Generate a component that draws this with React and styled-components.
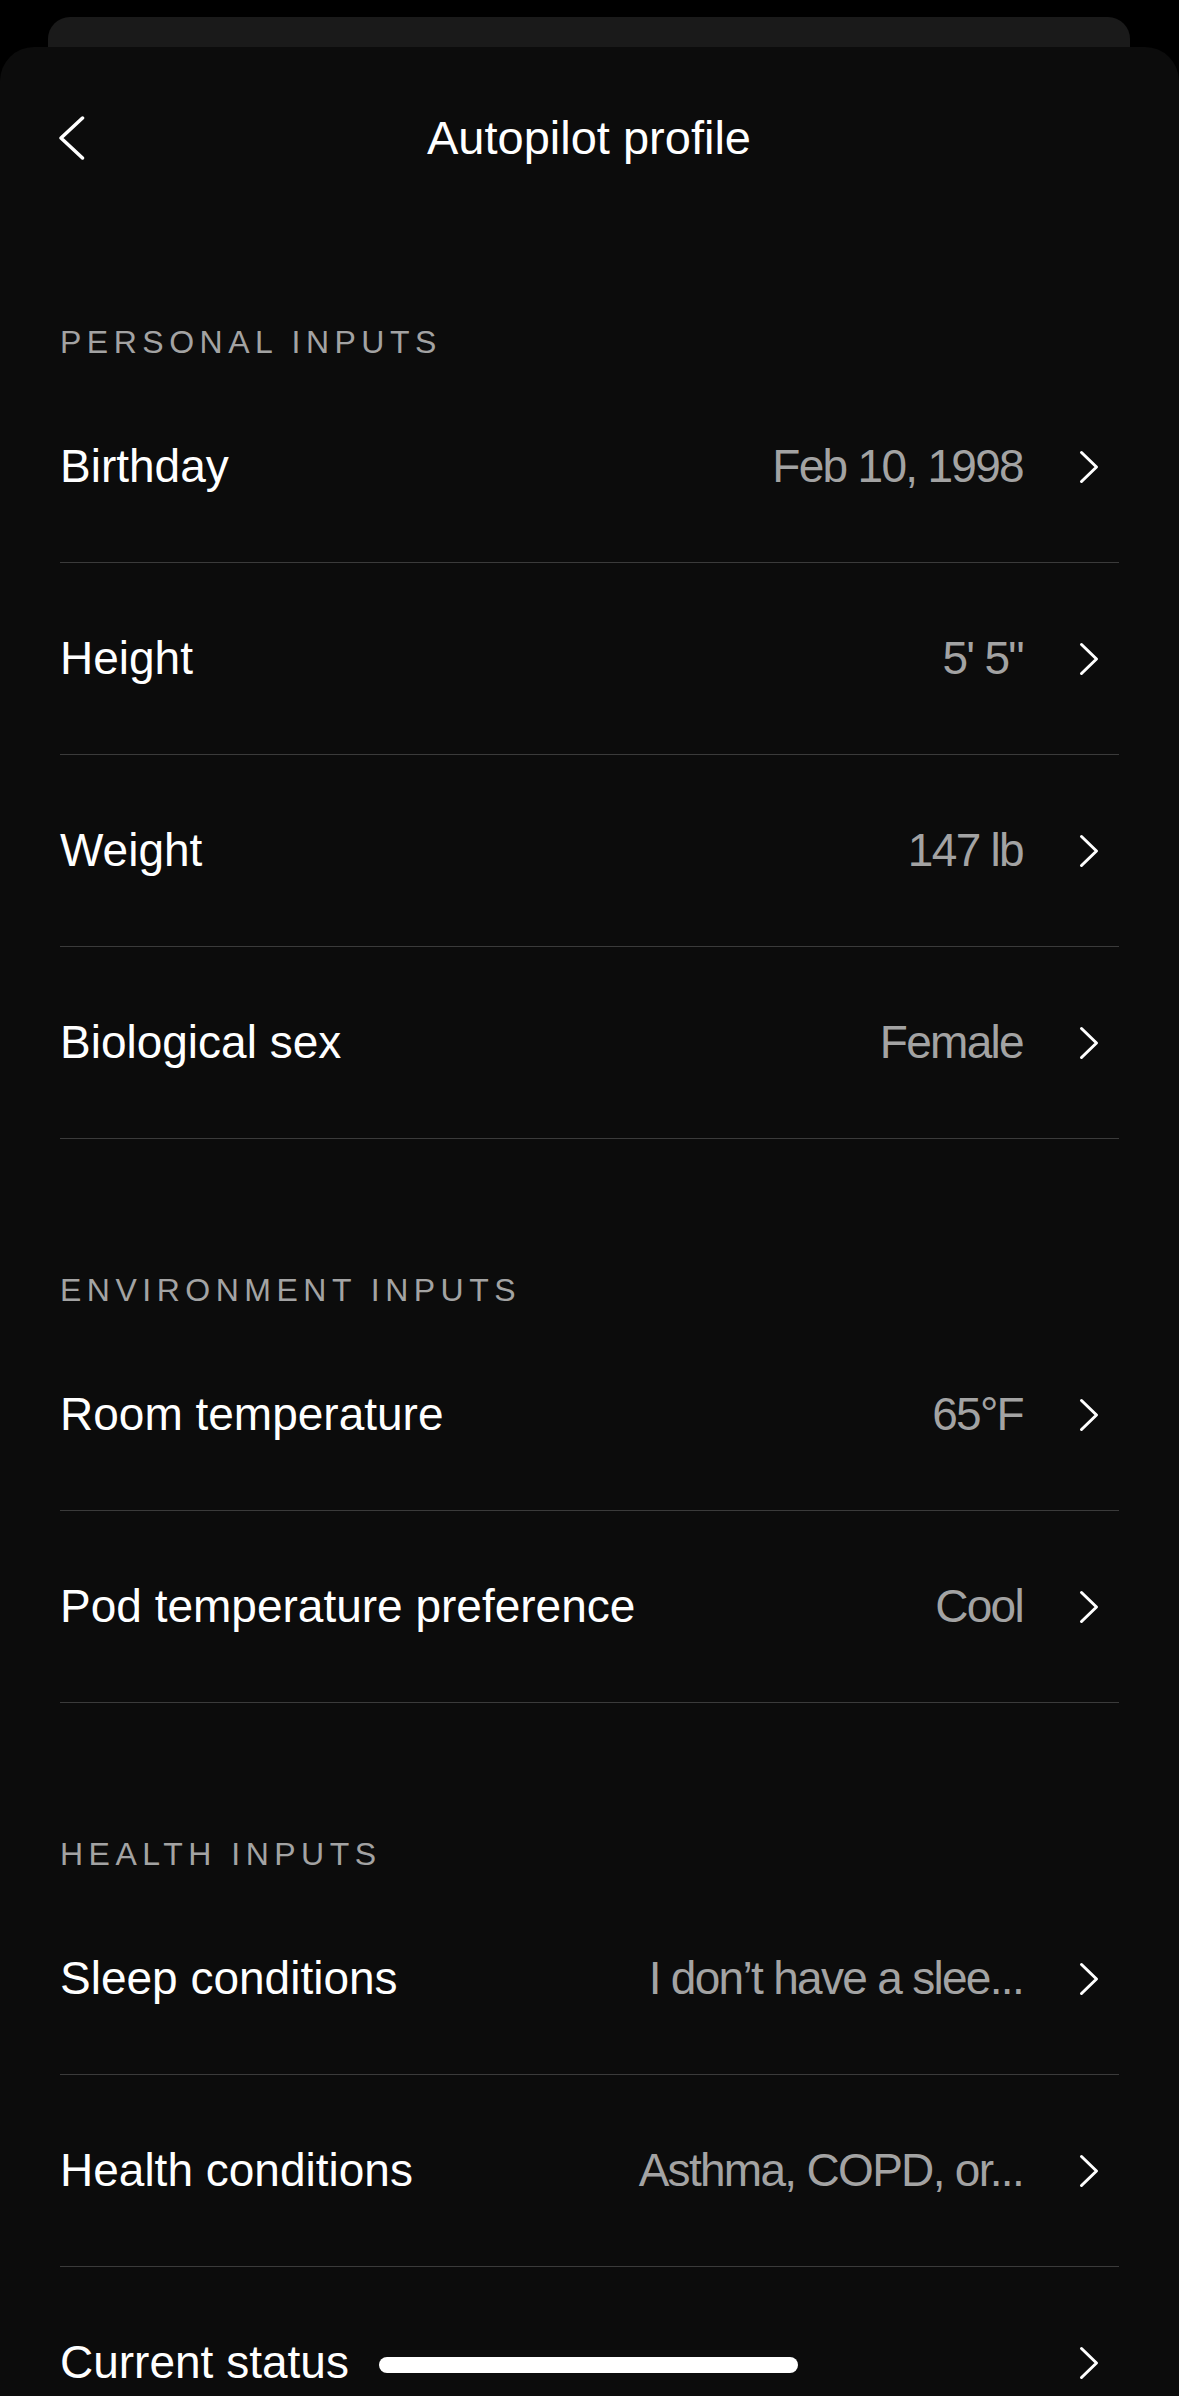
import React from 'react';
import styled, { createGlobalStyle } from 'styled-components';

const GlobalStyle = createGlobalStyle`
  html, body {
    margin: 0;
    padding: 0;
    background: #000;
  }
  body {
    font-family: "Liberation Sans", Arial, sans-serif;
    -webkit-font-smoothing: antialiased;
  }
`;

const Page = styled.div`
  min-height: 2396px;
  padding-top: 17px;
  box-sizing: border-box;
  background: #000;
`;

const BackSheet = styled.div`
  height: 60px;
  margin: 0 49px 0 48px;
  border-radius: 22px 22px 0 0;
  background: #1a1a1a;
`;

const Sheet = styled.div`
  position: relative;
  margin-top: -30px;
  min-height: 2349px;
  background: #0c0c0c;
  border-radius: 34px 34px 0 0;
`;

const NavBar = styled.div`
  display: grid;
  grid-template-columns: 1fr auto 1fr;
  align-items: center;
  height: 80px;
  padding: 51px 60px 13px 59px;
`;

const BackButton = styled.button`
  justify-self: start;
  display: flex;
  align-items: center;
  padding: 0;
  border: 0;
  background: transparent;
  color: #fff;
  cursor: pointer;
`;

const Title = styled.h1`
  margin: 0;
  font-size: 47px;
  font-weight: 400;
  line-height: 80px;
  color: #fff;
`;

const Section = styled.section`
  padding-top: ${({ first }) => (first ? '131px' : '131px')};
`;

const SectionTitle = styled.h2`
  margin: 0 60px 9px;
  font-size: 32px;
  font-weight: 400;
  line-height: 40px;
  letter-spacing: 5.5px;
  color: #a3a3a3;
`;

const Row = styled.div`
  display: flex;
  align-items: center;
  height: 192px;
  box-sizing: border-box;
  margin: 0 60px;
  border-bottom: 1px solid ${({ last }) => (last ? 'transparent' : '#3b3b3b')};
  cursor: pointer;
`;

const Label = styled.span`
  font-size: 46px;
  line-height: 1.2;
  color: #fff;
  white-space: nowrap;
`;

const Value = styled.span`
  margin-left: auto;
  font-size: 46px;
  line-height: 1.2;
  letter-spacing: -1.7px;
  color: #a3a3a3;
  white-space: nowrap;
`;

const Redacted = styled.span`
  width: 419px;
  height: 16px;
  margin-left: 30px;
  margin-top: 4px;
  border-radius: 8px;
  background: #fff;
`;

const Spacer = styled.span`
  flex: 1;
`;

const ChevronBox = styled.span`
  display: flex;
  margin-left: 56px;
  margin-right: 20px;
  color: #fff;
`;

const ChevronLeft = () => (
  <svg width="26" height="44" viewBox="0 0 26 44" fill="none">
    <polyline points="23.5,2 2,22 23.5,42" stroke="currentColor" strokeWidth="3.5" strokeLinecap="round" strokeLinejoin="round" />
  </svg>
);

const ChevronRight = () => (
  <svg width="20" height="34" viewBox="0 0 20 34" fill="none">
    <polyline points="2.5,2.5 17.5,17 2.5,31.5" stroke="currentColor" strokeWidth="3" strokeLinecap="round" strokeLinejoin="round" />
  </svg>
);

const sections = [
  {
    title: 'PERSONAL INPUTS',
    rows: [
      { label: 'Birthday', value: 'Feb 10, 1998' },
      { label: 'Height', value: '5\' 5"' },
      { label: 'Weight', value: '147 lb' },
      { label: 'Biological sex', value: 'Female' }
    ]
  },
  {
    title: 'ENVIRONMENT INPUTS',
    rows: [
      { label: 'Room temperature', value: '65°F' },
      { label: 'Pod temperature preference', value: 'Cool' }
    ]
  },
  {
    title: 'HEALTH INPUTS',
    rows: [
      { label: 'Sleep conditions', value: 'I don’t have a slee...' },
      { label: 'Health conditions', value: 'Asthma, COPD, or...' },
      { label: 'Current status', redacted: true }
    ]
  }
];

const App = () => (
  <>
    <GlobalStyle />
    <Page>
      <BackSheet />
      <Sheet>
        <NavBar>
          <BackButton aria-label="Back">
            <ChevronLeft />
          </BackButton>
          <Title>Autopilot profile</Title>
          <span />
        </NavBar>

        {sections.map((section, i) => (
          <Section key={section.title} first={i === 0}>
            <SectionTitle>{section.title}</SectionTitle>
            {section.rows.map((row) => (
              <Row key={row.label} last={row.redacted}>
                <Label>{row.label}</Label>
                {row.redacted ? (
                  <>
                    <Redacted />
                    <Spacer />
                  </>
                ) : (
                  <Value>{row.value}</Value>
                )}
                <ChevronBox>
                  <ChevronRight />
                </ChevronBox>
              </Row>
            ))}
          </Section>
        ))}
      </Sheet>
    </Page>
  </>
);

export default App;
